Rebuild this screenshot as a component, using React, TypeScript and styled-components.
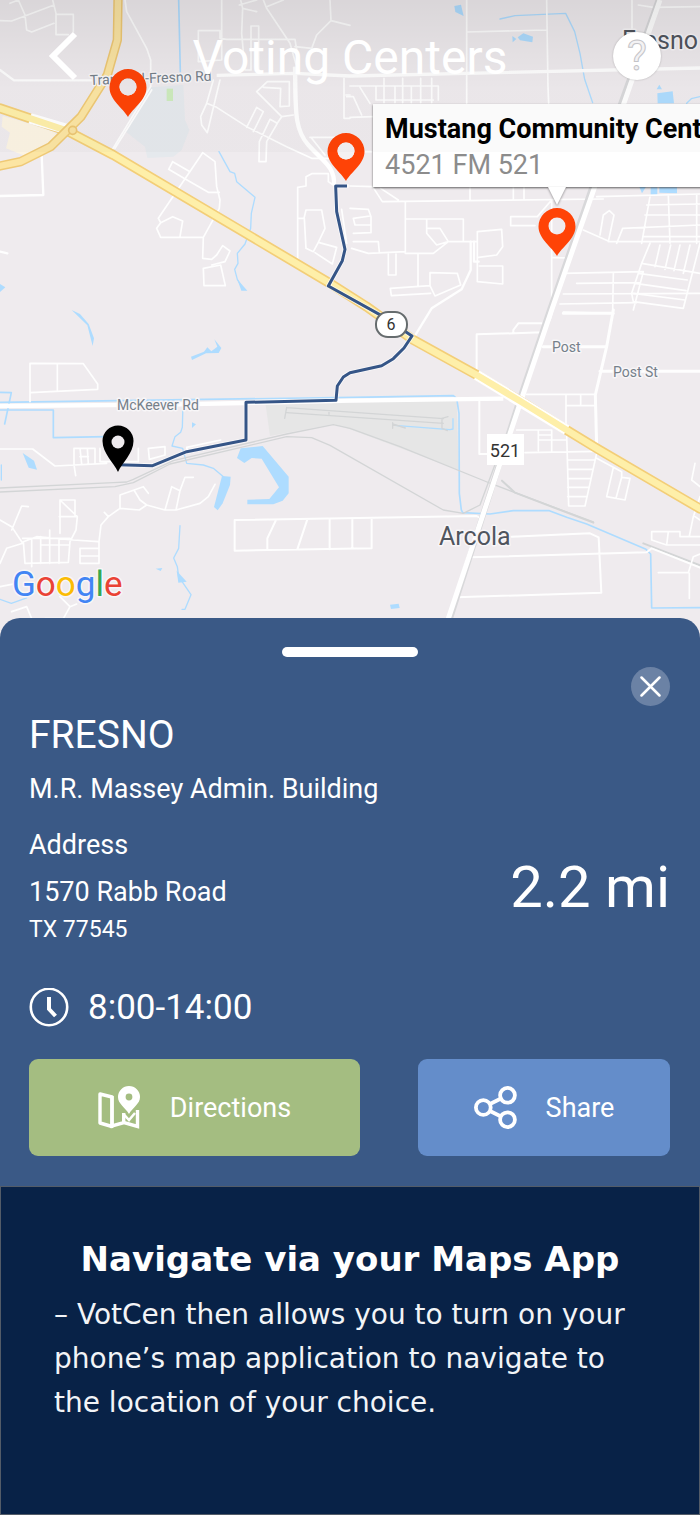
import React from 'react';
import styled, { createGlobalStyle } from 'styled-components';

const GlobalStyle = createGlobalStyle`
  *, *::before, *::after { box-sizing: border-box; }
  body { margin: 0; background: #082247; }
  h1, h2, h3, p { margin: 0; font-weight: 400; }
  button { font: inherit; color: inherit; border: 0; padding: 0; background: none; cursor: pointer; }
`;

const Screen = styled.main`
  display: flex;
  flex-direction: column;
  min-height: 100vh;
  color: #fff;
  font-family: Roboto, 'Liberation Sans', sans-serif;
`;

/* ---------- map ---------- */

const MapArea = styled.section`
  position: relative;
  overflow: hidden;
  background: #efebee;
`;

const MapDrawing = styled.svg`
  display: block;
  width: 100%;
  height: auto;
`;

const MapLabel = styled.text<{ $size?: number; $tone?: string; $weight?: number }>`
  font-family: Roboto, 'Liberation Sans', sans-serif;
  font-size: ${(p) => p.$size ?? 14}px;
  font-weight: ${(p) => p.$weight ?? 400};
  fill: ${(p) => p.$tone ?? '#75808a'};
  stroke: #f8f6f8;
  stroke-width: 3px;
  stroke-linejoin: round;
  paint-order: stroke;
`;

const ShieldLabel = styled(MapLabel)`
  stroke: none;
  text-anchor: middle;
`;

const TopBar = styled.header`
  position: absolute;
  top: 0;
  left: 0;
  right: 0;
  height: 152px;
  padding: 0 39px 40px;
  display: grid;
  grid-template-columns: 48px 1fr 48px;
  align-items: center;
  background: linear-gradient(rgba(0, 0, 0, 0.09), rgba(0, 0, 0, 0.02) 60%);
`;

const Title = styled.h1`
  padding-top: 4px;
  font-size: 48px;
  line-height: 56px;
  text-align: center;
  white-space: nowrap;
`;

const BackButton = styled.button`
  display: grid;
  place-items: center;
  width: 48px;
  height: 56px;
`;

const HelpButton = styled.button`
  width: 48px;
  height: 48px;
  border-radius: 50%;
  background: #fff;
  box-shadow: 0 0 2px rgba(0, 0, 0, 0.25);
  font-size: 42px;
  line-height: 48px;
  text-align: center;
  color: #f3f2f4;
  -webkit-text-stroke: 1px #c4c4c8;
`;

const Callout = styled.div`
  position: absolute;
  left: 53.3%;
  top: 16.25%;
  width: 368px;
  padding: 7px 12px 4px;
  background: #fff;
  box-shadow: 0 1px 2px rgba(0, 0, 0, 0.6);
  white-space: nowrap;

  &::after {
    content: '';
    position: absolute;
    left: 50%;
    top: 100%;
    margin-left: -9px;
    border: 9px solid transparent;
    border-top: 18px solid #fff;
    border-bottom: 0;
    filter: drop-shadow(0 1px 1px rgba(0, 0, 0, 0.4));
  }
`;

const CalloutTitle = styled.h3`
  font-size: 27px;
  line-height: 36px;
  font-weight: 700;
  color: #000;
`;

const CalloutText = styled.p`
  font-size: 27px;
  line-height: 36px;
  color: #8c8c8c;
`;

/* ---------- details sheet ---------- */

const Sheet = styled.section`
  position: relative;
  display: flex;
  flex-direction: column;
  margin-top: -22px;
  padding: 29px 30px 30px 29px;
  border-radius: 20px 20px 0 0;
  background: #3a5986;
`;

const Handle = styled.div`
  align-self: center;
  width: 136px;
  height: 10px;
  border-radius: 5px;
  background: #fff;
`;

const CloseButton = styled.button`
  align-self: flex-end;
  display: grid;
  place-items: center;
  width: 39px;
  height: 39px;
  margin-top: 10px;
  border-radius: 50%;
  background: #6b82a5;
`;

const City = styled.h2`
  margin-top: 5px;
  font-size: 39px;
  line-height: 48px;
`;

const Line = styled.p<{ $small?: boolean }>`
  font-size: ${(p) => (p.$small ? 23 : 27)}px;
  line-height: ${(p) => (p.$small ? 36 : 40)}px;
`;

const Place = styled(Line)`
  margin: 10px 0 16px;
`;

const PlaceRow = styled.div`
  display: flex;
  justify-content: space-between;
  align-items: center;
`;

const Address = styled.div`
  display: grid;

  & > :first-child { margin-bottom: 7px; }
`;

const Distance = styled.p`
  font-size: 58px;
  line-height: 64px;
`;

const Hours = styled.div`
  display: flex;
  align-items: center;
  gap: 19px;
  margin: 40px 0 31px;
  font-size: 35px;
  line-height: 40px;
`;

const Actions = styled.div`
  display: grid;
  grid-template-columns: 331fr 252fr;
  gap: 58px;
`;

const ActionButton = styled.button<{ $tone: string }>`
  display: flex;
  justify-content: center;
  align-items: center;
  gap: 29px;
  height: 97px;
  border-radius: 9px;
  background: ${(p) => p.$tone};
  font-size: 27px;
  line-height: 40px;
`;

/* ---------- caption ---------- */

const Caption = styled.section`
  flex: 1;
  padding: 48px 53px;
  border: 1px solid #535c68;
  background: #082247;
  font-family: 'DejaVu Sans', sans-serif;
`;

const CaptionTitle = styled.h2`
  font-size: 34px;
  line-height: 48px;
  font-weight: 700;
  text-align: center;
`;

const CaptionText = styled.p`
  margin-top: 10px;
  font-size: 28px;
  line-height: 44px;
  color: #f2f4f7;
`;

const Pin = ({ x, y, color, hole }: { x: number; y: number; color: string; hole?: string }) => (
  <g transform={`translate(${x} ${y})`}>
    <path
      d="M0 0C-5-9-18.500-17-18.500-29.500A18.500 18.500 0 0 1 18.500-29.500C18.500-17 5-9 0 0Z M0-38.500A8.500 8.500 0 1 0 0-21.500A8.500 8.500 0 1 0 0-38.500Z"
      fill={color}
      fillRule="evenodd"
    />
    {hole && <circle cy="-30" r="8.500" fill={hole} />}
  </g>
);

/* The roads are drawn on a grid three times finer than the labels. */
const Terrain = () => (
  <g transform="scale(.33333)" fill="none" strokeLinejoin="round" strokeLinecap="round">
    {/* parks, plots and the airfield */}
    <path d="M450 262L550 255L555 360L568 390L545 450L520 470L442 474L435 440L378 395L420 330Z" fill="#e5e9ed" />
    <path d="M500 266H519V303H500Z" fill="#cdebbd" />
    <path d="M8 348L60 362L160 395L180 410L120 450L70 466L18 445L30 398L5 380Z" fill="#fcf4e3" />
    <path d="M797 1215L1370 1200L1376 1410L1050 1288L1000 1272L810 1308Z" fill="#e6e6e6" />

    {/* water */}
    <g fill="#aedcff">
      <path d="M0 852L16 862L0 876Z" />
      <path d="M712 838L742 872L724 872Z" />
      <path d="M215 930L240 942L266 972L282 1015L278 1038L262 976Z" />
      <path d="M573 1070L612 1055L622 1042L634 1054L652 1040L643 1018L664 1044L656 1059L618 1060L576 1080Z" />
      <path d="M68 1359L102 1382L111 1409L86 1403Z" />
      <path d="M576 1267L588 1273L576 1284Z" />
      <path d="M722 1345L788 1338L866 1430V1480L848 1502L820 1513H742V1499L808 1497L837 1462L785 1376L755 1374L733 1389L711 1374Z" />
      <path d="M666 1428L692 1430L690 1455L668 1510L653 1531L642 1521Z" />
      <path d="M530 1712L560 1745L535 1748Z" />
      <path d="M467 1706L487 1704L482 1713Z" />
      <path d="M1363 18L1383 14L1391 48L1366 36Z" />
      <path d="M1553 112L1570 100L1599 110L1597 127L1560 121Z" />
      <path d="M1537 108L1549 117L1538 127Z" />
      <path d="M1972 280L2018 274L2022 310H1973Z" />
      <path d="M1970 268L1978 254L1986 268Z" />
      <path d="M1952 562H1972V584H1952Z M1978 562H2031V580L1978 578Z M1918 560H1938L1926 580Z" />
      <path d="M1170 1814L1196 1811L1199 1824L1173 1827Z" />
    </g>
    <g stroke="#aedcff" strokeWidth="4">
      <path d="M536 0L541 215" strokeWidth="5" />
      <path d="M657 455L690 515L704 520L710 545L765 592L754 640L752 685L735 732L712 760L714 790L704 808L712 838L726 862" />
      <path d="M1500 57L1545 47L1697 40L1724 95L1740 160L1754 238L1778 308" />
      <path d="M2060 310L2074 296L2100 290" />
      <path d="M0 1207L1060 1192L1360 1187L1370 1195L1377 1240L1378 1480L1384 1530L1388 1538L1470 1542L1540 1532H1648L1700 1552L1760 1572L1938 1648L1952 1662L1955 1824L2100 1823" strokeWidth="5" />
      <path d="M0 1177L34 1178L14 1272M0 1230H160V1313L320 1310" strokeWidth="5" />
      <path d="M549 1210L547 1282L542 1297L525 1310L516 1338L548 1345L560 1390L610 1395L640 1405L672 1432M4 1395V1440" />
      <path d="M540 1577L536 1645L521 1674L532 1700L536 1730L573 1784L555 1828H546M0 1798L34 1810L80 1794" />
      <path d="M1183 1276L1350 1289L1359 1287V1256" />
    </g>

    {/* railways */}
    <g stroke="#d3d5d6" strokeWidth="4">
      <path d="M0 1464L340 1448L380 1446L400 1438L520 1382L860 1302L1000 1274L1050 1285L1200 1340L1476 1452L1780 1566" />
      <path d="M0 1476L345 1460L400 1448L510 1392L860 1310L935 1313L990 1336L1330 1530L1390 1540L1440 1515L1490 1380" />
      <path d="M1506 1442L1545 1478L1780 1568" strokeWidth="6" />
      <path d="M1930 1630L2100 1696" strokeWidth="6" />
      <path d="M860 1223L1330 1256M860 1238L1330 1270M860 1222L854 1255M987 1232V1243M1178 1268V1285M1178 1272L1216 1284M1344 1250L1326 1255V1285L1342 1292" />
    </g>

    {/* minor streets */}
    <g stroke="#fefefe" strokeWidth="5">
      <path d="M0 62L35 63L162 15M30 10L55 0L75 45L80 90L95 96L162 70M158 0L168 40V104H205M168 43H220V95" />
      <path d="M375 0L380 35L440 145L452 180V260L330 460M345 445L455 270" />
      <path d="M665 0V180L595 185V92H660V115L680 118H885L895 180M722 0L728 25L725 100L735 210H753V78H776V212M728 25L770 35M718 15L770 0M790 0L800 25L870 130L890 200M800 20L850 0M990 0L993 62L950 105L935 145L885 140M993 62L1050 76" />
      <path d="M0 210L42 241H280M125 465L130 585L0 588M0 755L22 760" strokeWidth="7" />
      <path d="M640 240L620 310L650 322L740 380L860 440L935 475H1000M620 310L602 350L605 375L622 398L660 240M770 275L802 245H868V318L840 320L842 265L790 262M770 275L845 350L880 345M740 382L770 322L790 335L760 395M777 485L778 425L810 358L832 370L800 425L798 485ZM845 350L830 372M930 412H1005M935 415L975 465" />
      <path d="M608 458L645 485L650 560L660 600L658 625L610 712L608 775L635 778L650 765L668 737L690 753L675 785L635 795M608 458L475 655L482 668L518 650L548 663L540 710M482 668L470 685L482 712H610M518 485L570 515M518 485L506 508L552 535L625 577H658M610 805L662 795L676 857H612Z" />
      <path d="M893 790V562L918 558V530L935 521H985V545L1000 555M893 655H912L918 630H965L975 685L955 727L940 755L918 745L913 655M955 727L1010 742L997 792L945 758M1025 628L1040 730" />
      <path d="M1400 0V310M1400 96L1640 90M1640 0L1644 260L1646 310M1896 0V90M1915 15L1960 22L2100 20M1032 235V355H1050M1038 285H1050" />
      <path d="M1050 258H1315V300M1152 235V308M1185 258V308M1208 235V308M1234 258V308M1262 235V308M1295 235V308M1128 300H1300M1128 258V300M1040 290L1060 290L1085 345M1080 262L1110 310M1050 352L1120 350M1050 455H1115" />
      <path d="M1050 558L1118 560L1147 605L1810 597M1142 565L1195 600M1216 605V755L1105 760L1055 745M1410 560V600M1540 560V597M1572 560V597M1050 625L1105 628L1113 650V698L1060 700M1060 655L1110 648M1060 655L1065 675H1112M1060 725H1135L1138 757M1165 762V825H1188V762M1254 760V857M1171 865L1290 857L1305 888L1382 855L1372 820L1290 818V857M1171 865L1174 887L1292 880M1216 657H1390V723M1280 660V700L1310 735L1345 725M1280 685H1320L1345 725H1432V695L1505 688L1508 740L1490 765L1436 772M1216 760H1300L1345 725M1432 725V845L1508 852V798H1438" />
      <path d="M1412 725L1412 810L1385 868L1295 925L1240 1015M1422 725V785H1436" strokeWidth="7" />
      <path d="M1605 677H1532V650H1612L1655 600V925M1658 773L1705 774M1790 590L2100 582M1750 690L1830 725H2100M1850 730L1868 685L2100 675M1800 705L1810 645L1828 632L1842 645L1825 725M1950 590L1925 730M2005 585L2010 730M2090 585V730M1940 615L2100 612M1935 645H2100M1930 710H2100M1950 730L1925 790L2100 820M1925 790L1895 880L1900 905L2050 925L2100 730M1980 735L1965 800M2012 735L1995 808M2040 735L2022 812M2070 735L2050 820M1915 820L2062 840M1905 850L2058 872M1900 880L2055 900" />
      <path d="M1690 820L1930 815L1900 930M1690 820L1650 960M1840 820L1838 935M1730 850L1920 848M1690 882L2100 880M1680 912L1910 908M1690 936L1840 940" />
      <path d="M90 1205V1090L250 1091L293 1152V1168L90 1178M172 1091V1170" />
      <path d="M0 1347H98L165 1398L320 1390M222 1345V1395L227 1427M222 1345H285V1392M240 1345L245 1392M262 1345L265 1392M240 1370H265M300 1345V1385H415V1345M445 1345L495 1340V1365L448 1378ZM560 1342L662 1320M560 1345L570 1358" />
      <path d="M360 1525V1485L430 1460L445 1480M403 1472L420 1500L440 1515L418 1530L360 1525L325 1550L303 1575L297 1625V1690H240V1645H295M313 1537L325 1550M240 1668H295M440 1515L495 1530H528L600 1510L625 1490L645 1453M495 1530L515 1460L540 1472L528 1530M540 1472L555 1432H580" />
      <path d="M180 1500H225V1550H180ZM180 1500L232 1550L228 1590L210 1625L205 1687L75 1690L70 1625L110 1610L220 1620L295 1625M180 1550V1600M178 1550H232M68 1615H210M95 1615V1700M122 1610V1690M149 1590V1690M177 1620V1690M122 1635H208M35 1590L65 1518L85 1520M0 1560L35 1580L68 1630L20 1645L0 1690M0 1760L50 1750M180 1790L210 1820L190 1856H135M35 1835L80 1820L95 1856M230 1812L210 1820" />
      <path d="M704 1560L1430 1548L1450 1560M704 1560V1652L1115 1645V1555M828 1560L802 1615V1650M922 1558L892 1648M989 1557V1648M1057 1555V1645" strokeWidth="6" />
      <path d="M1430 1115V1003L1628 997M1540 1000V990L1555 970H1625M1438 1200V1362H1465M1535 1610L1770 1600L1796 1612L1804 1778L1370 1792M1410 1672L1940 1657L1955 1645L2100 1703" strokeWidth="6" />
      <path d="M1630 1040H1820L1840 930M1690 940H1840M1820 1040L1786 1185L1790 1340M1800 1114H2100" strokeWidth="9" />
      <path d="M1580 1183H1785M1698 1185V1290M1742 1185V1217H1698V1217H1785M1550 1290H1655V1352M1615 1290V1352M1615 1320H1700M1655 1305H1615M1700 1300L1706 1518H1755L1790 1360M1575 1358L1790 1354M1703 1380H1785M1703 1408H1778M1703 1436H1772M1703 1462H1766M1703 1490H1760M1790 1375L1865 1415V1432L1890 1435L1875 1500L1820 1490L1840 1403M1865 1432L1848 1495" />
      <path d="M2085 1390L2075 1440L2100 1460M2100 1490L2080 1550L2068 1608M2085 1550L2100 1560M1955 1595H2040V1610H2100M1955 1595V1620L2000 1635H2100M2005 1595L2000 1635M1975 1718H2065L2080 1670L2100 1662M2068 1720V1795" />
    </g>

    {/* main streets */}
    <g stroke="#fff" strokeLinecap="butt">
      <path d="M885 200C888 320 880 385 925 435S1005 500 1002 555" strokeWidth="13" />
      <path d="M650 226L885 220L1050 228L2100 204" strokeWidth="10" />
      <path d="M0 1218L500 1214L1050 1202L1510 1196" strokeWidth="13" />
      <path d="M1976 0L1862 315L1650 930L1562 1190L1350 1856" stroke="#d8d8da" strokeWidth="18" />
      <path d="M1980 0L1870 315L1655 930L1567 1190L1345 1856" strokeWidth="15" />
    </g>

    {/* highways */}
    <path d="M0 325L200 392L340 465L985 847L1100 920L1240 1020L1430 1125L1560 1203L1700 1290L1790 1345L2100 1526" stroke="#f3ce78" strokeWidth="30" />
    <path d="M90 355L210 390M1430 1125L1700 1290" stroke="#fff" strokeWidth="32" strokeLinecap="butt" />
    <path d="M0 325L200 392L340 465L985 847L1100 920L1240 1020L1430 1125L1560 1203L1700 1290L1790 1345L2100 1526" stroke="#feefa9" strokeWidth="20" />
    <path d="M354 0L352 120L322 225L243 350L152 440L62 485L0 498" stroke="#efc975" strokeWidth="28" />
    <path d="M354 0L352 120L322 225L243 350L152 440L62 485L0 498" stroke="#fce5a3" strokeWidth="19" />
    <circle cx="218" cy="391" r="12" stroke="#ecc673" strokeWidth="5" fill="#f9e2a0" />

    {/* route */}
    <path d="M1041 558H1007L1010 635L1035 748L1027 782L985 858L1150 950L1236 1008L1212 1044L1180 1076L1145 1097L1050 1118L1030 1131L1012 1158L1008 1201L738 1207V1320L560 1355L458 1397L353 1394" stroke="#fff" strokeWidth="14" opacity=".7" />
    <path d="M1041 558H1007L1010 635L1035 748L1027 782L985 858L1150 950L1236 1008L1212 1044L1180 1076L1145 1097L1050 1118L1030 1131L1012 1158L1008 1201L738 1207V1320L560 1355L458 1397L353 1394" stroke="#355587" strokeWidth="9" strokeLinecap="butt" />
  </g>
);

const BallotMap = () => (
  <MapDrawing viewBox="0 0 700 640" role="img" aria-label="Map of voting centers around Arcola">
    <rect width="700" height="640" fill="#efebee" />
    <Terrain />
    <MapLabel x="90" y="85" transform="rotate(-2 90 85)">Trammel-Fresno Rd</MapLabel>
    <MapLabel x="117" y="410">McKeever Rd</MapLabel>
    <MapLabel x="552" y="352">Post</MapLabel>
    <MapLabel x="613" y="377">Post St</MapLabel>
    <MapLabel x="622" y="49" $size={25} $tone="#50555e">Fresno</MapLabel>
    <MapLabel x="439" y="545" $size={25} $tone="#50555e">Arcola</MapLabel>
    <rect x="376" y="312" width="31" height="25" rx="12" fill="#fff" stroke="#666c6e" strokeWidth="2" />
    <ShieldLabel x="391" y="330" $size={16} $tone="#333">6</ShieldLabel>
    <rect x="487" y="434" width="37" height="31" fill="#fff" />
    <ShieldLabel x="505" y="457" $size={18} $tone="#333">521</ShieldLabel>
    <MapLabel x="12" y="596" $size={35} aria-label="Google">
      <tspan fill="#4285f4">G</tspan>
      <tspan fill="#ea4335">o</tspan>
      <tspan fill="#fbbc05">o</tspan>
      <tspan fill="#4285f4">g</tspan>
      <tspan fill="#34a853">l</tspan>
      <tspan fill="#ea4335">e</tspan>
    </MapLabel>
    <Pin x={128} y={117} color="#ff4306" hole="#eee9ec" />
    <Pin x={346} y={181} color="#ff4306" hole="#f4f1f3" />
    <Pin x={557} y={256} color="#ff4306" />
    <g transform="translate(118 472)">
      <path d="M0 0C-4-9-15.500-19-15.500-31A15.500 15.500 0 0 1 15.500-31C15.500-19 4-9 0 0Z" fill="#000" />
      <circle cy="-30" r="6.500" fill="#efebee" />
    </g>
  </MapDrawing>
);

const BackIcon = () => (
  <svg width="30" height="50" viewBox="0 0 30 50" fill="none" stroke="#fff" strokeWidth="6" aria-hidden="true">
    <path d="M27 3L5 25L27 47" />
  </svg>
);

const CloseIcon = () => (
  <svg width="21" height="21" viewBox="0 0 21 21" stroke="#fff" strokeWidth="2.500" strokeLinecap="round" aria-hidden="true">
    <path d="M1.500 1.500L19.500 19.500M19.500 1.500L1.500 19.500" />
  </svg>
);

const ClockIcon = () => (
  <svg width="40" height="40" viewBox="0 0 40 40" fill="none" stroke="#fff" aria-hidden="true">
    <circle cx="20" cy="19" r="18.200" strokeWidth="2.600" />
    <path d="M20 9V21L26.500 28" strokeWidth="4" />
  </svg>
);

const DirectionsIcon = () => (
  <svg width="43" height="43" viewBox="0 0 43 43" fill="none" stroke="#fff" aria-hidden="true">
    <path d="M2 8L14 11V40.500L2 37Z" strokeWidth="3.400" strokeLinejoin="round" />
    <path d="M14 10V40L26 36.500L39.500 40.500V24M25.700 37V27" strokeWidth="3.400" />
    <path
      d="M31 28C27 21 20 18 20 11A11 11 0 0 1 42 11C42 18 35 21 31 28ZM31 7.600A3.400 3.400 0 1 0 31 14.400A3.400 3.400 0 1 0 31 7.600Z"
      fill="#fff"
      fillRule="evenodd"
      stroke="none"
    />
    <path d="M25.500 28L31 34L37 27" strokeWidth="2.500" />
  </svg>
);

const ShareIcon = () => (
  <svg width="43" height="43" viewBox="0 0 43 43" fill="none" stroke="#fff" strokeWidth="3.800" aria-hidden="true">
    <circle cx="9.300" cy="21.500" r="7.400" />
    <circle cx="33.500" cy="9.300" r="7.400" />
    <circle cx="33.500" cy="33.700" r="7.400" />
    <path d="M16 18L27 12.500M16 25L27 30.500" />
  </svg>
);

export default function App() {
  return (
    <>
      <GlobalStyle />
      <Screen>
        <MapArea>
          <BallotMap />
          <Callout>
            <CalloutTitle>Mustang Community Center</CalloutTitle>
            <CalloutText>4521 FM 521</CalloutText>
          </Callout>
          <TopBar>
            <BackButton type="button" aria-label="Back">
              <BackIcon />
            </BackButton>
            <Title>Voting Centers</Title>
            <HelpButton type="button" aria-label="Help">?</HelpButton>
          </TopBar>
        </MapArea>

        <Sheet>
          <Handle />
          <CloseButton type="button" aria-label="Close">
            <CloseIcon />
          </CloseButton>
          <City>FRESNO</City>
          <Place>M.R. Massey Admin. Building</Place>
          <PlaceRow>
            <Address>
              <Line>Address</Line>
              <Line>1570 Rabb Road</Line>
              <Line $small>TX 77545</Line>
            </Address>
            <Distance>2.2 mi</Distance>
          </PlaceRow>
          <Hours>
            <ClockIcon />
            <span>8:00-14:00</span>
          </Hours>
          <Actions>
            <ActionButton type="button" $tone="#a4bd81">
              <DirectionsIcon />
              Directions
            </ActionButton>
            <ActionButton type="button" $tone="#648dca">
              <ShareIcon />
              Share
            </ActionButton>
          </Actions>
        </Sheet>

        <Caption>
          <CaptionTitle>Navigate via your Maps App</CaptionTitle>
          <CaptionText>– VotCen then allows you to turn on your phone’s map application to navigate to the location of your choice.</CaptionText>
        </Caption>
      </Screen>
    </>
  );
}
